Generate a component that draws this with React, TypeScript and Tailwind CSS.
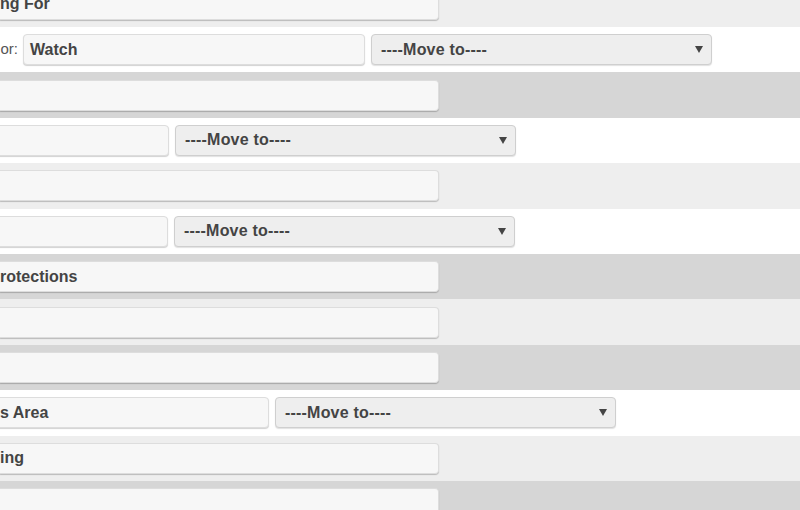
import React from "react"

type Row =
    | { kind: "plain"; bg: string; text: string }
    | { kind: "move"; shift: string; text: string; label?: string }

const rows: Row[] = [
    { kind: "plain", bg: "bg-[#eeeeee]", text: "ng For" },
    { kind: "move", shift: "ml-0", text: "Watch", label: "or:" },
    { kind: "plain", bg: "bg-[#d6d6d6]", text: "" },
    { kind: "move", shift: "ml-[-173px]", text: "" },
    { kind: "plain", bg: "bg-[#eeeeee]", text: "" },
    { kind: "move", shift: "ml-[-174px]", text: "" },
    { kind: "plain", bg: "bg-[#d6d6d6]", text: "rotections" },
    { kind: "plain", bg: "bg-[#eeeeee]", text: "" },
    { kind: "plain", bg: "bg-[#d6d6d6]", text: "" },
    { kind: "move", shift: "ml-[-73px]", text: "s Area" },
    { kind: "plain", bg: "bg-[#eeeeee]", text: "ing" },
    { kind: "plain", bg: "bg-[#d6d6d6]", text: "" },
]

function MoveSelect() {
    return (
        <div className="w-[341px] h-[31px] shrink-0 flex items-center justify-between pl-[9px] pr-[8px] bg-[#eeeeee] border border-[#cfcfcf] rounded-[4px] shadow-[0_1px_1px_rgba(0,0,0,0.12)]">
            <span className="tracking-[0.2px]">----Move to----</span>
            <svg width="8" height="7" viewBox="0 0 8 7">
                <path d="M0 0 H8 L4 7 Z" fill="#444" />
            </svg>
        </div>
    )
}

export default function App() {
    return (
        <div className="w-[800px] h-[510px] overflow-hidden bg-white font-['Liberation_Sans',Arial,sans-serif] text-[16px] font-bold text-[#444]">
            <div className="mt-[-18.4px] flex flex-col">
                {rows.map(function (row, i) {
                    if (row.kind === "plain") {
                        return (
                            <div key={i} className={"h-[45.4px] flex items-center " + row.bg}>
                                <div className="w-[439px] h-[31px] shrink-0 flex items-center bg-[#f7f7f7] border border-[#dddddd] border-l-0 rounded-r-[4px] shadow-[0_1px_1px_rgba(0,0,0,0.22)]">
                                    {row.text}
                                </div>
                            </div>
                        )
                    }
                    return (
                        <div key={i} className="h-[45.4px] flex items-center bg-white">
                            <div className={"flex items-center gap-[6px] " + row.shift}>
                                {row.label ? (
                                    <span className="w-[18px] mr-[-1px] text-[15px] font-normal text-[#555] whitespace-nowrap overflow-hidden flex justify-end">
                                        {row.label}
                                    </span>
                                ) : null}
                                <div
                                    className={
                                        "w-[342px] h-[31px] shrink-0 flex items-center bg-[#f7f7f7] border border-[#dddddd] rounded-[4px] shadow-[0_1px_1px_rgba(0,0,0,0.18)] " +
                                        (row.label ? "pl-[6px]" : "pl-[72px]")
                                    }
                                >
                                    {row.text}
                                </div>
                                <MoveSelect />
                            </div>
                        </div>
                    )
                })}
            </div>
        </div>
    )
}
